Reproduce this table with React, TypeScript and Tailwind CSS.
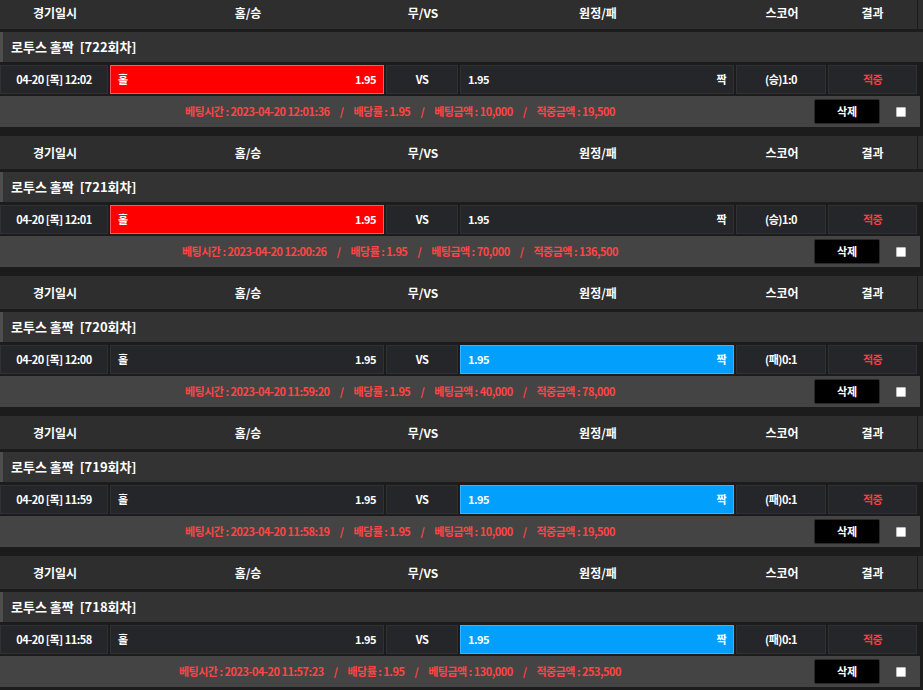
import React from "react"

type Bet = {
  round: number
  date: string
  pick: "home" | "away"
  score: string
  time: string
  amount: string
  win: string
}

const bets: Bet[] = [
  { round: 722, date: "04-20 [목] 12:02", pick: "home", score: "(승)1:0", time: "2023-04-20 12:01:36", amount: "10,000", win: "19,500" },
  { round: 721, date: "04-20 [목] 12:01", pick: "home", score: "(승)1:0", time: "2023-04-20 12:00:26", amount: "70,000", win: "136,500" },
  { round: 720, date: "04-20 [목] 12:00", pick: "away", score: "(패)0:1", time: "2023-04-20 11:59:20", amount: "40,000", win: "78,000" },
  { round: 719, date: "04-20 [목] 11:59", pick: "away", score: "(패)0:1", time: "2023-04-20 11:58:19", amount: "10,000", win: "19,500" },
  { round: 718, date: "04-20 [목] 11:58", pick: "away", score: "(패)0:1", time: "2023-04-20 11:57:23", amount: "130,000", win: "253,500" },
]

// 컬럼 헤더
function HeadRow() {
  return (
    <div className="flex h-[33px] items-center bg-[#2e2e2e] text-[12px] font-bold text-white">
      <div className="w-[110px] text-center">경기일시</div>
      <div className="w-[276px] text-center">홈/승</div>
      <div className="w-[74px] text-center">무/VS</div>
      <div className="w-[276px] text-center">원정/패</div>
      <div className="w-[92px] text-center">스코어</div>
      <div className="w-[89px] text-center">결과</div>
      <div className="h-full w-px bg-[#1c1c1c]" />
    </div>
  )
}

function Sep() {
  return <span className="mx-[10px]">/</span>
}

function BetBlock({ bet }: { bet: Bet }) {
  const home = bet.pick === "home"
  const away = bet.pick === "away"
  const cell = "h-full border border-[#303135] bg-[#25262a] flex items-center"

  return (
    <div className="mb-[9px] flex flex-col">
      <HeadRow />
      <div className="mt-[3px] flex h-[30px] items-center border-l-[3px] border-[#4e4e4e] bg-[#333333] pl-[8px] text-[13px] font-bold text-white">
        로투스 홀짝&nbsp;&nbsp;[{bet.round}회차]
      </div>
      <div className="mt-[3px] flex h-[29px] w-[917px] gap-[2px] text-[11px] font-bold tracking-[-0.5px] text-white">
        <div className={`${cell} w-[108px] justify-center`}>{bet.date}</div>
        <div
          className={
            home
              ? "flex h-full w-[274px] items-center justify-between border border-[#ff5a5a] bg-[#ff0000] px-[7px]"
              : `${cell} w-[274px] justify-between px-[7px]`
          }
        >
          <span>홀</span>
          <span>1.95</span>
        </div>
        <div className={`${cell} w-[72px] justify-center`}>VS</div>
        <div
          className={
            away
              ? "flex h-full w-[274px] items-center justify-between border border-[#3ab4ff] bg-[#039ffc] px-[7px]"
              : `${cell} w-[274px] justify-between px-[7px]`
          }
        >
          <span>1.95</span>
          <span>짝</span>
        </div>
        <div className={`${cell} w-[90px] justify-center`}>{bet.score}</div>
        <div className={`${cell} w-[89px] justify-center text-[#ff3c3c]`}>적중</div>
      </div>
      <div className="mt-[2px] flex h-[31px] w-[920px] items-center bg-[#444444] text-[11px] font-bold">
        <div className="w-[800px] text-center tracking-[-0.5px] text-[#ff4545]">
          베팅시간 : {bet.time}
          <Sep />
          배당률 : 1.95
          <Sep />
          베팅금액 : {bet.amount}
          <Sep />
          적중금액 : {bet.win}
        </div>
        <button className="ml-[14px] flex h-[25px] w-[66px] items-center justify-center rounded-[2px] border border-[#2a2a2a] bg-black text-white">
          삭제
        </button>
        <span className="ml-[16px] h-[10px] w-[10px] rounded-[1px] border border-[#bbbbbb] bg-white" />
      </div>
    </div>
  )
}

export default function App() {
  return (
    <div className="h-[690px] overflow-hidden bg-[#1c1c1c] font-['Noto_Sans_CJK_KR','Liberation_Sans',sans-serif]">
      <div className="-mt-[4px]">
        {bets.map((b) => (
          <BetBlock key={b.round} bet={b} />
        ))}
      </div>
    </div>
  )
}
